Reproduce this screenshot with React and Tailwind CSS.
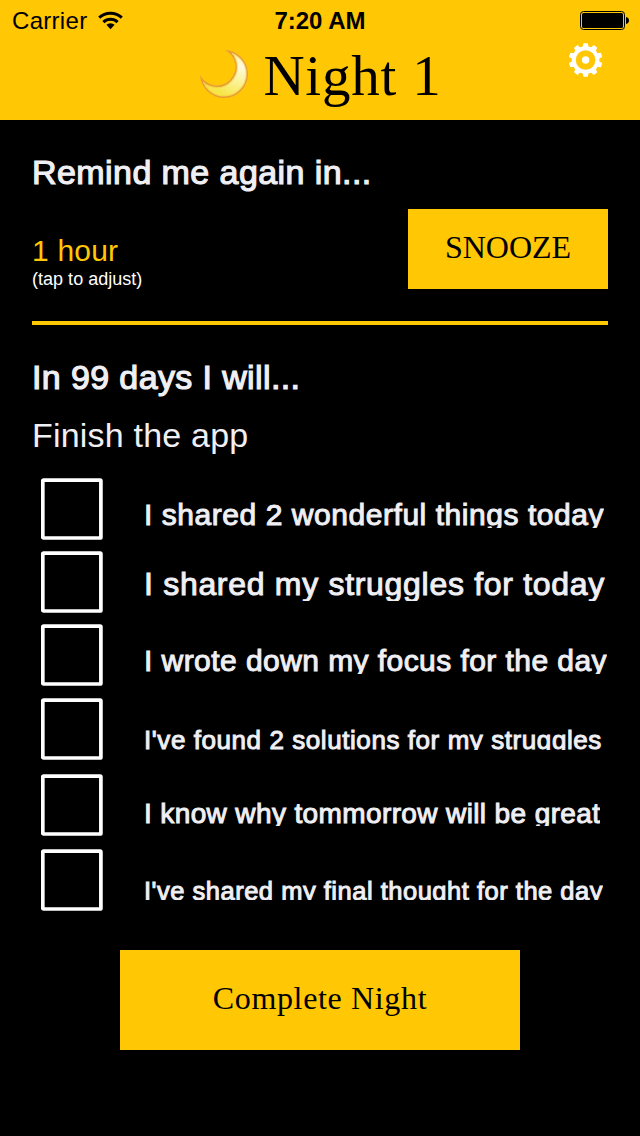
import { useState } from "react";

const tasks = [
  { text: "I shared 2 wonderful things today", row: "h-[73px]", label: "mt-[23px] h-[27px] leading-[27px] text-[30px] tracking-[0.55px]" },
  { text: "I shared my struggles for today", row: "h-[73px]", label: "mt-[19px] h-[31px] leading-[28px] text-[32px] tracking-[0.7px]" },
  { text: "I wrote down my focus for the day", row: "h-[74px]", label: "mt-[23px] h-[27px] leading-[27px] text-[30px] tracking-[0.44px]" },
  { text: "I've found 2 solutions for my struggles", row: "h-[76px]", label: "mt-[29px] h-[23px] leading-[26px] text-[26px] tracking-[0.57px]" },
  { text: "I know why tommorrow will be great", row: "h-[75px]", label: "mt-[26px] h-[26px] leading-[27px] text-[28px] tracking-[0.38px]" },
  { text: "I've shared my final thought for the day", row: "h-[62px]", label: "mt-[29px] h-[22px] leading-[26px] text-[25.5px] tracking-[0.51px]" },
];

const teeth = [0, 36, 72, 108, 144, 180, 216, 252, 288, 324];

const WifiIcon = () => (
  <svg className="ml-[11px] mt-[11px] h-[19px] w-[25px]" viewBox="0 0 25 19" fill="none" stroke="#000" strokeWidth="3">
    <path d="M1.2 6.6A16.6 16.6 0 0 1 23.8 6.6" />
    <path d="M5.4 11.1A10.2 10.2 0 0 1 19.6 11.1" />
    <path d="M8.4 13.8A6 6 0 0 1 16.6 13.8L12.5 18.2Z" fill="#000" stroke="none" />
  </svg>
);

const BatteryIcon = () => (
  <svg className="mr-[11px] mt-[11px] h-[19px] w-[49px]" viewBox="0 0 49 19">
    <rect x="0.5" y="0.5" width="44" height="18" rx="3" fill="none" stroke="#000" />
    <rect x="2" y="2" width="41" height="15" rx="1.5" />
    <path d="M46 6q3 .6 3 3.5t-3 3.5z" />
  </svg>
);

const MoonIcon = () => (
  <svg className="mt-[10px] h-12 w-12" viewBox="0 0 48 48">
    <defs>
      <radialGradient id="moon" gradientUnits="userSpaceOnUse" cx="42" cy="16" r="34">
        <stop offset="0" stopColor="#fffbe0" />
        <stop offset="0.4" stopColor="#fcf4a4" />
        <stop offset="1" stopColor="#f6e648" />
      </radialGradient>
      <clipPath id="moonClip">
        <path d="M24.7 0A24 24 0 1 1 0.1 25A18.6 18.6 0 1 0 24.7 0Z" />
      </clipPath>
    </defs>
    <g clipPath="url(#moonClip)">
      <path d="M24.7 0A24 24 0 1 1 0.1 25A18.6 18.6 0 1 0 24.7 0Z" fill="url(#moon)" />
      <path d="M24.7 0A24 24 0 1 1 0.1 25A18.6 18.6 0 1 0 24.7 0Z" fill="none" stroke="#f3c040" strokeWidth="5" opacity="0.5" />
      <path d="M24.7 0A24 24 0 1 1 0.1 25A18.6 18.6 0 1 0 24.7 0Z" fill="none" stroke="#e8962c" strokeWidth="2.8" opacity="0.9" />
    </g>
  </svg>
);

const GearIcon = () => (
  <svg className="h-[34px] w-[34px]" viewBox="-16.6 -17 34 34" fill="#fff">
    <circle r="11.8" fill="none" stroke="#fff" strokeWidth="4" />
    <circle r="3.7" />
    {teeth.map((angle) => (
      <path key={angle} d="M-3 -13L-2.2 -16.8H2.2L3 -13Z" transform={`rotate(${angle})`} />
    ))}
  </svg>
);

const Task = ({ task, done, onToggle }) => (
  <div className={`flex items-start pl-[9px] ${task.row}`}>
    <button onClick={onToggle} className="h-[62px] w-[62px] shrink-0">
      <svg className="block h-[62px] w-[62px]" viewBox="0 0 62 62" fill="none" stroke="#fff" strokeWidth="3.7">
        <rect x="1.8" y="2.1" width="58.1" height="57.9" rx="0.8" />
        {done && <path d="M14 32L26 44L48 18" />}
      </svg>
    </button>
    <p className={`ml-[41px] overflow-hidden whitespace-nowrap [-webkit-text-stroke:1px_#efeff4] ${task.label}`}>{task.text}</p>
  </div>
);

const App = () => {
  const [done, setDone] = useState([]);

  const toggle = (i) => {
    setDone(done.includes(i) ? done.filter((d) => d !== i) : [...done, i]);
  };

  return (
    <div className="h-[1136px] w-[640px] overflow-hidden bg-black font-['Liberation_Sans',sans-serif] text-[#efeff4]">

      {/* Header */}
      <header className="h-[120px] bg-[#ffc704] text-black">
        <div className="grid h-10 grid-cols-[1fr_auto_1fr] text-2xl leading-[42px]">
          <div className="flex items-start pl-3">
            <span className="tracking-[0.3px]">Carrier</span>
            <WifiIcon />
          </div>
          <span className="font-bold">7:20 AM</span>
          <div className="flex items-start justify-end">
            <BatteryIcon />
          </div>
        </div>
        <div className="grid grid-cols-[1fr_auto_1fr]">
          <span />
          <div className="flex gap-[15px] pl-[2px]">
            <MoonIcon />
            <h1 className="mt-2 font-['Liberation_Serif',serif] text-[57px] leading-[56px] tracking-[0.8px]">Night 1</h1>
          </div>
          <button className="mr-[37px] mt-[3px] h-[34px] justify-self-end">
            <GearIcon />
          </button>
        </div>
      </header>

      <main className="px-8">
        {/* Snooze */}
        <section className="h-[205px] border-b-4 border-[#ffc704] pt-8">
          <h2 className="text-[34px] leading-[40px] tracking-[0.43px] [-webkit-text-stroke:1.2px_#efeff4]">Remind me again in...</h2>
          <div className="mt-[17px] flex justify-between">
            <div className="pt-[25px]">
              <p className="text-[30px] leading-[34px] tracking-[0.2px] text-[#ffc704]">1 hour</p>
              <p className="text-[18px] leading-[22px] tracking-[0.02px] text-white">(tap to adjust)</p>
            </div>
            <button className="h-20 w-[200px] bg-[#ffc704] pb-1 font-['Liberation_Serif',serif] text-[32px] text-black">SNOOZE</button>
          </div>
        </section>

        {/* Goal */}
        <section className="h-[153px] pt-8">
          <h2 className="text-[34px] leading-[40px] tracking-[0.38px] [-webkit-text-stroke:1.2px_#efeff4]">In 99 days I will...</h2>
          <p className="mt-[18px] text-[34px] leading-[40px] tracking-[0.2px]">Finish the app</p>
        </section>

        {/* Checklist */}
        {tasks.map((task, i) => (
          <Task key={task.text} task={task} done={done.includes(i)} onToggle={() => toggle(i)} />
        ))}

        <button className="mx-auto mt-[39px] block h-[100px] w-[400px] bg-[#ffc704] pb-1 font-['Liberation_Serif',serif] text-[32px] tracking-[0.65px] text-black">
          Complete Night
        </button>
      </main>
    </div>
  );
};

export default App;
